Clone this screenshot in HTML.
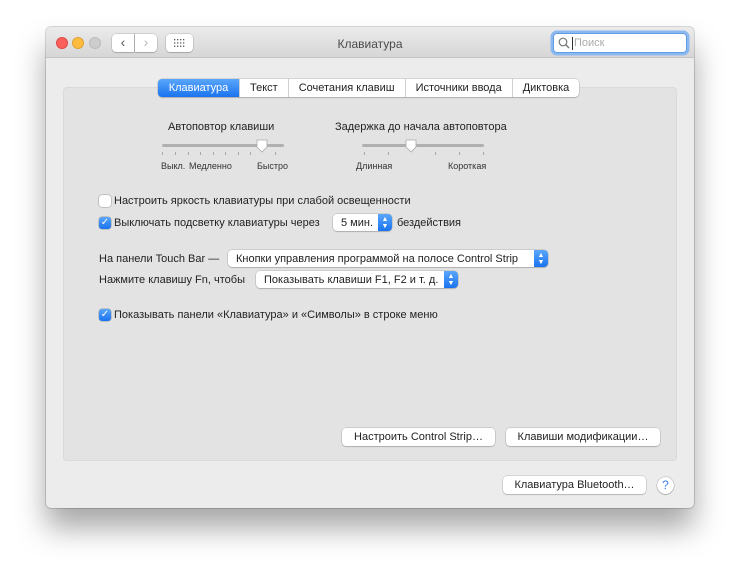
<!DOCTYPE html>
<html><head><meta charset="utf-8"><style>
*{margin:0;padding:0;box-sizing:border-box}
body{width:740px;height:575px;background:#fff;position:relative;overflow:hidden;font-family:"Liberation Sans","DejaVu Sans",sans-serif;font-size:11px;color:#222}
.a{position:absolute;white-space:nowrap}
.win{position:absolute;left:46px;top:27px;width:648px;height:481px;background:#ececec;border-radius:5px;box-shadow:0 20px 30px rgba(0,0,0,.35),0 0 0 1px rgba(0,0,0,.15)}
.tb{position:absolute;left:0;top:0;width:648px;height:31px;background:linear-gradient(#ebebeb,#d6d6d6);border-bottom:1px solid #c4c4c4;border-radius:5px 5px 0 0}
.dot{position:absolute;top:10px;width:12px;height:12px;border-radius:50%}
.btn{position:absolute;background:#fff;border-radius:4px;box-shadow:0 0 0 .5px rgba(0,0,0,.2),0 1px 1px rgba(0,0,0,.15);text-align:center;font-size:11px;line-height:18px}
.panel{position:absolute;left:63px;top:87px;width:614px;height:374px;background:#e3e3e3;border-radius:4px;border:1px solid #dadada}
.tabs{position:absolute;left:158px;top:79px;height:18px;display:flex;background:#fff;border-radius:4px;box-shadow:0 0 0 .5px rgba(0,0,0,.2),0 1px 1px rgba(0,0,0,.15)}
.tabs div{padding:0 10px;line-height:18px;border-left:1px solid #d0d0d0;font-size:11px}
.tabs div.s{background:linear-gradient(#5aa6fb,#1a73f0);color:#fff;border:0;border-radius:4px 0 0 4px}
.cb{position:absolute;width:12px;height:12px;border-radius:3px;background:#fff;box-shadow:0 0 0 .5px rgba(0,0,0,.3)}
.cb.on{background:linear-gradient(#5aa6fb,#1a73f0);color:#fff;font-size:10px;line-height:12px;text-align:center}
.pop{position:absolute;background:#fff;border-radius:4px;box-shadow:0 0 0 .5px rgba(0,0,0,.2),0 1px 1px rgba(0,0,0,.15);line-height:18px;height:17px;padding-left:8px}
.pop i{position:absolute;right:0;top:0;width:14px;height:17px;background:linear-gradient(#5aa6fb,#1a73f0);border-radius:0 4px 4px 0;color:#fff;font-style:normal;font-size:7px;line-height:7px;text-align:center;padding-top:2px}
.tr{position:absolute;height:3px;background:#b0b0b0;border-radius:2px}
.tk{position:absolute;width:1px;height:3px;background:#a8a8a8;top:152px}
.th{position:absolute;top:139px;width:12px;height:14px}
.sm{font-size:9px;color:#333}
.t{top:1px}
</style></head><body>
<div class="win">
<div class="tb"></div>
<div class="dot" style="left:10px;background:#fc605c;border:.5px solid #de4a45"></div>
<div class="dot" style="left:26px;background:#fdbc40;border:.5px solid #dea236"></div>
<div class="dot" style="left:43px;background:#cdcdcd;border:.5px solid #bbb"></div>
</div>
<div class="btn" style="left:112px;top:34px;width:22px;height:18px;border-radius:4px 0 0 4px;font-size:14px;line-height:17px;color:#555">&#8249;</div>
<div class="btn" style="left:135px;top:34px;width:22px;height:18px;border-radius:0 4px 4px 0;font-size:14px;line-height:17px;color:#bbb">&#8250;</div>
<div class="btn" style="left:166px;top:34px;width:27px;height:18px"></div>
<svg class="a" style="left:173px;top:38px" width="14" height="10" fill="#555"><g><rect x="1" y="1" width="1.3" height="1.3"/><rect x="4" y="1" width="1.3" height="1.3"/><rect x="7" y="1" width="1.3" height="1.3"/><rect x="10" y="1" width="1.3" height="1.3"/><rect x="1" y="4.3" width="1.3" height="1.3"/><rect x="4" y="4.3" width="1.3" height="1.3"/><rect x="7" y="4.3" width="1.3" height="1.3"/><rect x="10" y="4.3" width="1.3" height="1.3"/><rect x="1" y="7.6" width="1.3" height="1.3"/><rect x="4" y="7.6" width="1.3" height="1.3"/><rect x="7" y="7.6" width="1.3" height="1.3"/><rect x="10" y="7.6" width="1.3" height="1.3"/></g></svg>
<div class="a" style="left:0;width:740px;text-align:center;top:37px;font-size:12px;color:#4a4a4a">Клавиатура</div>
<div class="a" style="left:553px;top:33px;width:134px;height:20px;background:#fff;border-radius:4px;box-shadow:0 0 0 2.5px #8cb8f0,0 0 0 1px #5e9ce8 inset"></div>
<svg class="a" style="left:558px;top:37px" width="12" height="12"><circle cx="5" cy="5" r="3.8" fill="none" stroke="#777" stroke-width="1.2"/><line x1="7.8" y1="7.8" x2="11" y2="11" stroke="#777" stroke-width="1.4"/></svg>
<div class="a" style="left:572px;top:37px;font-size:11px;color:#aaa;border-left:1px solid #333;padding-left:1px;line-height:13px">Поиск</div>

<div class="panel"></div>
<div class="tabs"><div class="s" style="width:81px;text-align:center">Клавиатура</div><div>Текст</div><div>Сочетания клавиш</div><div>Источники ввода</div><div>Диктовка</div></div>

<div class="a" style="left:168px;top:121px">Автоповтор клавиши</div>
<div class="a" style="left:335px;top:121px">Задержка до начала автоповтора</div>
<div class="tr" style="left:162px;top:144px;width:122px"></div>
<div class="tr" style="left:362px;top:144px;width:122px"></div>
<div class="tk" style="left:162px"></div><div class="tk" style="left:175px"></div><div class="tk" style="left:188px"></div><div class="tk" style="left:200px"></div><div class="tk" style="left:213px"></div><div class="tk" style="left:225px"></div><div class="tk" style="left:238px"></div><div class="tk" style="left:250px"></div><div class="tk" style="left:275px"></div>
<div class="tk" style="left:364px"></div><div class="tk" style="left:388px"></div><div class="tk" style="left:435px"></div><div class="tk" style="left:459px"></div><div class="tk" style="left:483px"></div>
<svg class="th" style="left:256px"><path d="M1 1h10v7l-5 5l-5-5z" fill="#fff" stroke="#aaa" stroke-width=".8"/></svg>
<svg class="th" style="left:405px"><path d="M1 1h10v7l-5 5l-5-5z" fill="#fff" stroke="#aaa" stroke-width=".8"/></svg>
<div class="a sm" style="left:161px;top:161px">Выкл.</div>
<div class="a sm" style="left:189px;top:161px">Медленно</div>
<div class="a sm" style="left:257px;top:161px">Быстро</div>
<div class="a sm" style="left:356px;top:161px">Длинная</div>
<div class="a sm" style="left:448px;top:161px">Короткая</div>

<div class="cb" style="left:99px;top:195px"></div>
<div class="a" style="left:114px;top:195px">Настроить яркость клавиатуры при слабой освещенности</div>
<div class="cb on" style="left:99px;top:217px">✓</div>
<div class="a" style="left:114px;top:217px">Выключать подсветку клавиатуры через</div>
<div class="pop" style="left:333px;top:214px;width:59px">5 мин.<i>▲<br>▼</i></div>
<div class="a" style="left:397px;top:217px">бездействия</div>

<div class="a" style="left:99px;top:253px">На панели Touch Bar —</div>
<div class="pop" style="left:228px;top:250px;width:320px">Кнопки управления программой на полосе Control Strip<i>▲<br>▼</i></div>
<div class="a" style="left:99px;top:274px">Нажмите клавишу Fn, чтобы</div>
<div class="pop" style="left:256px;top:271px;width:202px">Показывать клавиши F1, F2 и т. д.<i>▲<br>▼</i></div>

<div class="cb on" style="left:99px;top:309px">✓</div>
<div class="a" style="left:114px;top:309px">Показывать панели «Клавиатура» и «Символы» в строке меню</div>

<div class="btn" style="left:342px;top:428px;width:153px">Настроить Control Strip…</div>
<div class="btn" style="left:506px;top:428px;width:154px">Клавиши модификации…</div>
<div class="btn" style="left:503px;top:476px;width:143px">Клавиатура Bluetooth…</div>
<div class="a" style="left:657px;top:477px;width:17px;height:17px;border-radius:50%;background:#fff;box-shadow:0 0 0 .5px rgba(0,0,0,.25),0 1px 1px rgba(0,0,0,.15);color:#3b82f0;text-align:center;line-height:17px;font-size:12px">?</div>
</body></html>
